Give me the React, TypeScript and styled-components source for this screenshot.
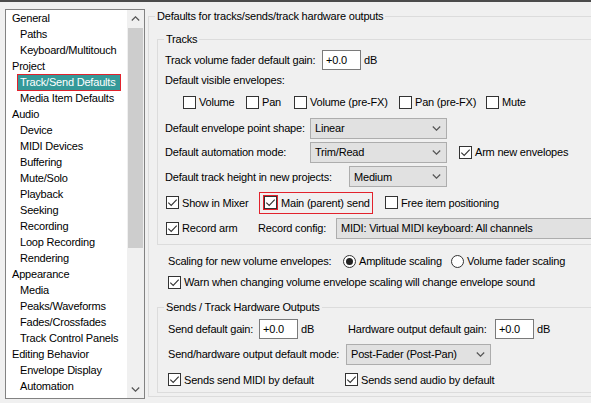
import styled, { createGlobalStyle } from "styled-components";

const GlobalStyle = createGlobalStyle`
  html, body {
    margin: 0;
    padding: 0;
    background: #f0f0f0;
  }
  body {
    font-family: "Liberation Sans", Arial, sans-serif;
    font-size: 11px;
    letter-spacing: -0.2px;
    color: #000;
  }
`;

const treeItems: { text: string; child?: boolean; selected?: boolean }[] = [
  { text: "General" },
  { text: "Paths", child: true },
  { text: "Keyboard/Multitouch", child: true },
  { text: "Project" },
  { text: "Track/Send Defaults", child: true, selected: true },
  { text: "Media Item Defaults", child: true },
  { text: "Audio" },
  { text: "Device", child: true },
  { text: "MIDI Devices", child: true },
  { text: "Buffering", child: true },
  { text: "Mute/Solo", child: true },
  { text: "Playback", child: true },
  { text: "Seeking", child: true },
  { text: "Recording", child: true },
  { text: "Loop Recording", child: true },
  { text: "Rendering", child: true },
  { text: "Appearance" },
  { text: "Media", child: true },
  { text: "Peaks/Waveforms", child: true },
  { text: "Fades/Crossfades", child: true },
  { text: "Track Control Panels", child: true },
  { text: "Editing Behavior" },
  { text: "Envelope Display", child: true },
  { text: "Automation", child: true },
];

function CheckMark() {
  return (
    <svg width="11" height="11" viewBox="0 0 11 11">
      <path d="M1.3 5.6 L4.2 8.5 L9.7 2.6" fill="none" stroke="#333" strokeWidth="1.1" />
    </svg>
  );
}

function Chevron({ up }: { up?: boolean }) {
  return (
    <svg width="9" height="5" viewBox="0 0 9 5">
      <path
        d={up ? "M0.8 4.5 L4.5 0.8 L8.2 4.5" : "M0.8 0.5 L4.5 4.2 L8.2 0.5"}
        fill="none"
        stroke="#555"
        strokeWidth="1.2"
      />
    </svg>
  );
}

function Check({
  label,
  checked,
  w,
  ml,
  marked,
}: {
  label: string;
  checked?: boolean;
  w?: number;
  ml?: number;
  marked?: boolean;
}) {
  return (
    <CheckItem $w={w} $ml={ml} $gap={marked ? 4 : 3}>
      <Box $marked={marked}>{checked && <CheckMark />}</Box>
      {label}
    </CheckItem>
  );
}

function Radio({ label, checked, w }: { label: string; checked?: boolean; w?: number }) {
  return (
    <CheckItem $w={w} $gap={3}>
      <RadioCircle>{checked && <RadioDot />}</RadioCircle>
      {label}
    </CheckItem>
  );
}

function Combo({ value, w, arrow = true }: { value: string; w: number; arrow?: boolean }) {
  return (
    <ComboBox $w={w}>
      <span>{value}</span>
      {arrow && (
        <ComboArrow>
          <Chevron />
        </ComboArrow>
      )}
    </ComboBox>
  );
}

export default function App() {
  return (
    <>
      <GlobalStyle />
      <Page>
        <Tree>
          <TreeList>
            {treeItems.map((item) => (
              <TreeItem key={item.text} $child={item.child}>
                {item.selected ? <Selected>{item.text}</Selected> : item.text}
              </TreeItem>
            ))}
          </TreeList>
          <ScrollBar>
            <ScrollArrow>
              <Chevron up />
            </ScrollArrow>
            <Thumb />
            <ScrollTrack />
            <ScrollArrow>
              <Chevron />
            </ScrollArrow>
          </ScrollBar>
        </Tree>

        <Right>
          <Group $w={470}>
            <Legend>Defaults for tracks/sends/track hardware outputs</Legend>
            <OuterBody>
              <Group>
                <Legend>Tracks</Legend>
                <TracksBody>
                  <Row $h={24}>
                    <Label $w={157}>Track volume fader default gain:</Label>
                    <TextBox>+0.0</TextBox>
                    <Unit>dB</Unit>
                  </Row>
                  <Row $h={16}>
                    <Label>Default visible envelopes:</Label>
                  </Row>
                  <Row $h={28} $indent={18}>
                    <Check label="Volume" w={63} />
                    <Check label="Pan" w={48} />
                    <Check label="Volume (pre-FX)" w={105} />
                    <Check label="Pan (pre-FX)" w={87} />
                    <Check label="Mute" />
                  </Row>
                  <Row $h={24}>
                    <Label $w={145}>Default envelope point shape:</Label>
                    <Combo value="Linear" w={137} />
                  </Row>
                  <Row $h={24}>
                    <Label $w={145}>Default automation mode:</Label>
                    <Combo value="Trim/Read" w={137} />
                    <Check label="Arm new envelopes" checked ml={12} />
                  </Row>
                  <Row $h={25}>
                    <Label $w={184}>Default track height in new projects:</Label>
                    <Combo value="Medium" w={98} />
                  </Row>
                  <Row $h={27} $indent={1}>
                    <Check label="Show in Mixer" checked w={93} />
                    <Highlight>
                      <Check label="Main (parent) send" checked marked />
                    </Highlight>
                    <Check label="Free item positioning" ml={12} />
                  </Row>
                  <Row $h={24} $indent={1}>
                    <Check label="Record arm" checked w={92} />
                    <Label $w={78}>Record config:</Label>
                    <Combo value="MIDI: Virtual MIDI keyboard: All channels" w={300} arrow={false} />
                  </Row>
                </TracksBody>
              </Group>

              <Row $h={24} $indent={11} $mt={4}>
                <Label $w={175}>Scaling for new volume envelopes:</Label>
                <Radio label="Amplitude scaling" checked w={108} />
                <Radio label="Volume fader scaling" />
              </Row>
              <Row $h={18} $indent={11}>
                <Check label="Warn when changing volume envelope scaling will change envelope sound" checked />
              </Row>

              <Group $mt={9}>
                <Legend>Sends / Track Hardware Outputs</Legend>
                <SendsBody>
                  <Row $h={22}>
                    <Label $w={91}>Send default gain:</Label>
                    <TextBox>+0.0</TextBox>
                    <Unit $w={47}>dB</Unit>
                    <Label $w={147}>Hardware output default gain:</Label>
                    <TextBox>+0.0</TextBox>
                    <Unit>dB</Unit>
                  </Row>
                  <Row $h={28}>
                    <Label $w={178}>Send/hardware output default mode:</Label>
                    <Combo value="Post-Fader (Post-Pan)" w={145} />
                  </Row>
                  <Row $h={23}>
                    <Check label="Sends send MIDI by default" checked w={177} />
                    <Check label="Sends send audio by default" checked />
                  </Row>
                </SendsBody>
              </Group>
            </OuterBody>
          </Group>
        </Right>
      </Page>
    </>
  );
}

const Page = styled.div`
  box-sizing: border-box;
  width: 591px;
  height: 403px;
  overflow: hidden;
  border-top: 2px solid #4b4b4b;
  padding: 7px 0 0 5px;
  display: flex;
  align-items: flex-start;
  gap: 3px;
`;

const Tree = styled.div`
  box-sizing: border-box;
  flex-shrink: 0;
  width: 140px;
  height: 390px;
  border: 1px solid #828282;
  background: #fff;
  display: flex;
`;

const TreeList = styled.div`
  flex: 1;
  overflow: hidden;
`;

const TreeItem = styled.div<{ $child?: boolean }>`
  height: 16px;
  line-height: 16px;
  padding-left: ${(p) => (p.$child ? 14 : 6)}px;
  white-space: nowrap;
`;

const Selected = styled.span`
  display: inline-block;
  box-sizing: border-box;
  vertical-align: top;
  height: 17px;
  line-height: 15px;
  margin-left: -3px;
  padding: 0 5px 0 2px;
  background: #359999;
  color: #fff;
  border: 1px solid #e2222c;
`;

const ScrollBar = styled.div`
  width: 17px;
  display: flex;
  flex-direction: column;
  background: #f0f0f0;
`;

const ScrollArrow = styled.div`
  height: 17px;
  display: flex;
  align-items: center;
  justify-content: center;
`;

const Thumb = styled.div`
  height: 220px;
  margin: 1px 1px 0;
  background: #cdcdcd;
`;

const ScrollTrack = styled.div`
  flex: 1;
`;

const Right = styled.div`
  flex: 1;
  min-width: 0;
  overflow: hidden;
`;

const Group = styled.fieldset<{ $w?: number; $mt?: number }>`
  margin: ${(p) => p.$mt ?? 0}px 0 0;
  padding: 0;
  min-width: 0;
  ${(p) => (p.$w ? `width: ${p.$w}px;` : "")}
  box-sizing: border-box;
  border: 1px solid #dcdcdc;
`;

const Legend = styled.legend`
  margin-left: 6px;
  padding: 0 2px;
  height: 14px;
  line-height: 14px;
  white-space: nowrap;
`;

const OuterBody = styled.div`
  padding: 9px 0 3px 8px;
  display: flex;
  flex-direction: column;
`;

const TracksBody = styled.div`
  padding: 2px 0 4px 7px;
  display: flex;
  flex-direction: column;
`;

const SendsBody = styled.div`
  padding: 4px 0 1px 10px;
  display: flex;
  flex-direction: column;
`;

const Row = styled.div<{ $h: number; $indent?: number; $mt?: number }>`
  display: flex;
  align-items: center;
  height: ${(p) => p.$h}px;
  padding-left: ${(p) => p.$indent ?? 0}px;
  margin-top: ${(p) => p.$mt ?? 0}px;
  white-space: nowrap;
`;

const Label = styled.span<{ $w?: number }>`
  flex-shrink: 0;
  ${(p) => (p.$w ? `width: ${p.$w}px;` : "")}
`;

const Unit = styled.span<{ $w?: number }>`
  flex-shrink: 0;
  margin-left: 3px;
  ${(p) => (p.$w ? `width: ${p.$w}px;` : "")}
`;

const TextBox = styled.div`
  box-sizing: border-box;
  flex-shrink: 0;
  width: 39px;
  height: 20px;
  line-height: 18px;
  padding-left: 3px;
  background: #fff;
  border: 1px solid #7a7a7a;
`;

const ComboBox = styled.div<{ $w: number }>`
  box-sizing: border-box;
  flex-shrink: 0;
  width: ${(p) => p.$w}px;
  height: 21px;
  padding-left: 4px;
  display: flex;
  align-items: center;
  justify-content: space-between;
  background: #e1e1e1;
  border: 1px solid #adadad;
  white-space: nowrap;
`;

const ComboArrow = styled.span`
  display: flex;
  margin-right: 5px;
`;

const CheckItem = styled.label<{ $w?: number; $ml?: number; $gap: number }>`
  flex-shrink: 0;
  display: flex;
  align-items: center;
  gap: ${(p) => p.$gap}px;
  margin-left: ${(p) => p.$ml ?? 0}px;
  ${(p) => (p.$w ? `width: ${p.$w}px;` : "")}
`;

const Box = styled.span<{ $marked?: boolean }>`
  box-sizing: border-box;
  width: 13px;
  height: 13px;
  display: flex;
  align-items: center;
  justify-content: center;
  background: #fff;
  border: 1px solid #333;
  ${(p) => (p.$marked ? "outline: 1px solid #e2222c;" : "")}
`;

const RadioCircle = styled.span`
  box-sizing: border-box;
  width: 13px;
  height: 13px;
  border-radius: 50%;
  display: flex;
  align-items: center;
  justify-content: center;
  background: #fff;
  border: 1px solid #333;
`;

const RadioDot = styled.span`
  width: 7px;
  height: 7px;
  border-radius: 50%;
  background: #222;
`;

const Highlight = styled.div`
  box-sizing: border-box;
  flex-shrink: 0;
  width: 114px;
  height: 22px;
  padding-left: 4px;
  display: flex;
  align-items: center;
  border: 1px solid #e2222c;
`;
